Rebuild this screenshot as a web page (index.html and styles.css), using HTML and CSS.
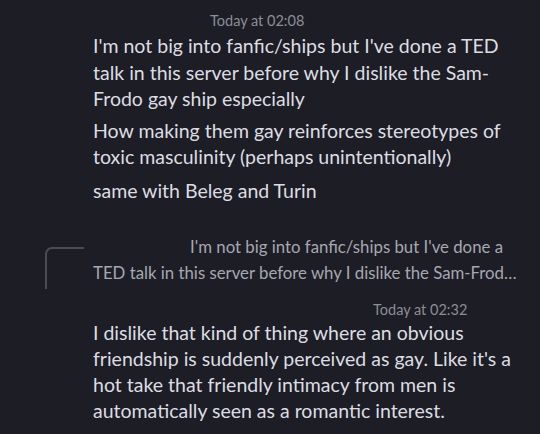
FILE: index.html
```html
<!DOCTYPE html>
<html>
<head>
<meta charset="utf-8">
<link rel="stylesheet" href="styles.css">
</head>
<body>
<div class="chat">
  <div class="msg first">
    <div class="head"><span class="stamp">Today at 02:08</span></div>
    <p class="line">I'm not big into fanfic/ships but I've done a TED talk in this server before why I dislike the Sam-Frodo gay ship especially</p>
    <p class="line">How making them gay reinforces stereotypes of toxic masculinity (perhaps unintentionally)</p>
    <p class="line last">same with Beleg and Turin</p>
  </div>
  <div class="msg second">
    <div class="reply">
      <span class="r1">I'm not big into fanfic/ships but I've done a</span>
      <span class="r2">TED talk in this server before why I dislike the Sam-Frod…</span>
    </div>
    <div class="head head2"><span class="stamp">Today at 02:32</span></div>
    <p class="line">I dislike that kind of thing where an obvious friendship is suddenly perceived as gay. Like it's a hot take that friendly intimacy from men is automatically seen as a romantic interest.</p>
  </div>
</div>
</body>
</html>
```
FILE: styles.css
```css
html, body {
  margin: 0;
  padding: 0;
  background: #1c1d25;
  width: 540px;
  height: 434px;
  overflow: hidden;
}
.chat {
  font-family: "Lato", "Noto Sans", sans-serif;
  color: #dcdde2;
}
.msg {
  padding-left: 93px;
  padding-right: 18px;
}
.first {
  padding-top: 8px;
}
.head {
  height: 25px;
  padding-left: 117px;
  display: flex;
  align-items: center;
}
.stamp {
  font-size: 14.5px;
  color: #8b8e97;
}
.line {
  margin: 0 0 5px 0;
  font-size: 19.5px;
  line-height: 26.5px;
}
.line.last {
  margin-top: 7px;
}
.second {
  position: relative;
  padding-top: 25px;
}
.reply {
  position: relative;
  font-size: 16.8px;
  line-height: 26px;
  color: #a6a8b0;
}
.reply::before {
  content: "";
  position: absolute;
  left: -48px;
  top: 13px;
  width: 37px;
  height: 40px;
  border-left: 2px solid #4a4c55;
  border-top: 2px solid #4a4c55;
  border-top-left-radius: 7px;
}
.r1 {
  display: block;
  text-align: right;
  padding-right: 19px;
}
.r2 {
  display: block;
  white-space: nowrap;
  margin-right: -10px;
}
.head2 {
  padding-left: 280px;
  height: 22px;
  margin-top: 12px;
}
.second .line {
  line-height: 26px;
}
```
